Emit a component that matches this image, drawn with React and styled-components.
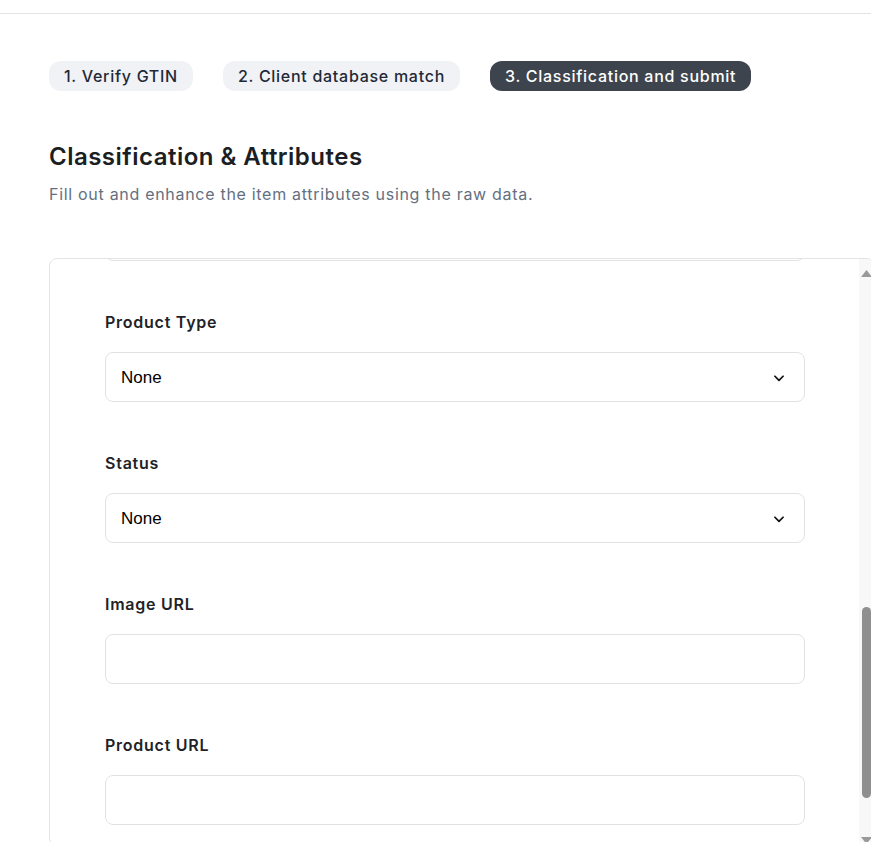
import React, { useLayoutEffect, useRef } from 'react'
import styled, { createGlobalStyle } from 'styled-components'

const GlobalStyle = createGlobalStyle`
  html, body {
    margin: 0;
    padding: 0;
    overflow: hidden;
    background: #fff;
  }
  body {
    font-family: Inter, "Noto Sans", sans-serif;
    color: #1f2328;
  }
  * {
    box-sizing: border-box;
  }
`

const TopBar = styled.header`
  height: 14px;
  border-bottom: 1px solid #e4e4e7;
`

const Main = styled.main`
  padding: 47px 0 0 49px;
  width: 900px;
`

const Steps = styled.nav`
  display: flex;
  gap: 30px;
`

const Step = styled.div`
  height: 30px;
  padding: 0 15px;
  border-radius: 12px;
  display: flex;
  align-items: center;
  font-size: 16px;
  font-weight: 500;
  line-height: 24px;
  letter-spacing: 0.72px;
  white-space: nowrap;
  background: ${p => (p.$active ? '#3e444d' : '#f1f2f5')};
  color: ${p => (p.$active ? '#ffffff' : '#1f2937')};
`

const Title = styled.h2`
  margin: 50px 0 0;
  font-size: 24px;
  line-height: 32px;
  font-weight: 600;
  letter-spacing: 0.48px;
  color: #1b1e23;
`

const Subtitle = styled.p`
  margin: 9px 0 0;
  font-size: 16px;
  line-height: 24px;
  letter-spacing: 0.7px;
  color: #64707f;
`

const Card = styled.section`
  position: relative;
  margin-top: 52px;
  width: 826px;
  height: 588px;
  border: 1px solid #e4e4e7;
  border-radius: 8px;
  overflow: hidden;
`

const Scroller = styled.div`
  height: 100%;
  overflow-y: scroll;
  scrollbar-width: none;
  &::-webkit-scrollbar {
    display: none;
  }
`

/* drawn scrollbar, the headless browser hides the native one */
const ScrollBar = styled.div`
  position: absolute;
  top: 0;
  right: 0;
  bottom: 0;
  width: 15px;
  background: #f8f8f8;
  display: flex;
  flex-direction: column;
`

const ArrowButton = styled.div`
  height: 22px;
  display: flex;
  justify-content: center;
  align-items: ${p => (p.$down ? 'flex-start' : 'flex-end')};
  padding: ${p => (p.$down ? '14px 0 0' : '0 0 4px')};
  svg {
    width: 11px;
    height: 8px;
    display: block;
  }
`

const Track = styled.div`
  position: relative;
  flex: 1;
`

const Thumb = styled.div`
  position: absolute;
  left: 3px;
  right: 3px;
  top: ${p => p.$top}px;
  height: ${p => p.$height}px;
  border-radius: 5px;
  background: #8f8f8f;
`

const Form = styled.form`
  display: flex;
  flex-direction: column;
  gap: 49px;
  padding: 56px 0 140px 55px;
`

const Field = styled.div`
  display: flex;
  flex-direction: column;
  gap: 18px;
  width: 700px;
`

const Label = styled.label`
  font-size: 16px;
  line-height: 24px;
  font-weight: 600;
  letter-spacing: 0.75px;
  color: #1f2328;
`

const SelectWrap = styled.div`
  position: relative;
`

const Select = styled.select`
  appearance: none;
  width: 100%;
  height: 50px;
  padding: 0 40px 0 15px;
  border: 1px solid #e2e2e4;
  border-radius: 8px;
  background: #fff;
  font-family: "Liberation Sans", Arial, sans-serif;
  font-size: 17px;
  color: #000;
`

const Chevron = styled.svg`
  position: absolute;
  right: 19px;
  top: 19px;
  width: 14px;
  height: 14px;
  pointer-events: none;
`

const Input = styled.input`
  width: 100%;
  height: 50px;
  padding: 0 15px;
  border: 1px solid #e2e2e4;
  border-radius: 8px;
  background: #fff;
  font-family: "Liberation Sans", Arial, sans-serif;
  font-size: 17px;
`

const fields = [
  { label: 'GTIN', type: 'text' },
  { label: 'Product Name', type: 'text' },
  { label: 'Brand', type: 'text' },
  { label: 'Manufacturer', type: 'text' },
  { label: 'Category', type: 'select' },
  { label: 'Subcategory', type: 'select' },
  { label: 'Description', type: 'text' },
  { label: 'Product Type', type: 'select' },
  { label: 'Status', type: 'select' },
  { label: 'Image URL', type: 'text' },
  { label: 'Product URL', type: 'text' },
]

const SelectField = ({ id }) => (
  <SelectWrap>
    <Select id={id} defaultValue="none">
      <option value="none">None</option>
    </Select>
    <Chevron viewBox="0 0 24 24" fill="none" stroke="#111" strokeWidth="3" strokeLinecap="round" strokeLinejoin="round">
      <path d="M5 9l7 7 7-7" />
    </Chevron>
  </SelectWrap>
)

export default function App() {
  const scroller = useRef(null)

  useLayoutEffect(() => {
    // park the form so "Product Type" sits near the top of the card
    if (scroller.current) scroller.current.scrollTop = 992
  }, [])

  return (
    <>
      <GlobalStyle />
      <TopBar />
      <Main>
        <Steps>
          <Step>1. Verify GTIN</Step>
          <Step>2. Client database match</Step>
          <Step $active>3. Classification and submit</Step>
        </Steps>
        <Title>Classification &amp; Attributes</Title>
        <Subtitle>Fill out and enhance the item attributes using the raw data.</Subtitle>
        <Card>
          <Scroller ref={scroller}>
            <Form>
              {fields.map((f, i) => {
                const id = `field-${i}`
                return (
                  <Field key={f.label}>
                    <Label htmlFor={id}>{f.label}</Label>
                    {f.type === 'select' ? <SelectField id={id} /> : <Input id={id} />}
                  </Field>
                )
              })}
            </Form>
          </Scroller>
          <ScrollBar aria-hidden="true">
            <ArrowButton>
              <svg viewBox="0 0 11 8"><path d="M0 8 L5.5 1 L11 8 Z" fill="#9a9a9a" /></svg>
            </ArrowButton>
            <Track>
              <Thumb $top={326} $height={191} />
            </Track>
            <ArrowButton $down>
              <svg viewBox="0 0 11 8"><path d="M0 0 L5.5 7 L11 0 Z" fill="#9a9a9a" /></svg>
            </ArrowButton>
          </ScrollBar>
        </Card>
      </Main>
    </>
  )
}
